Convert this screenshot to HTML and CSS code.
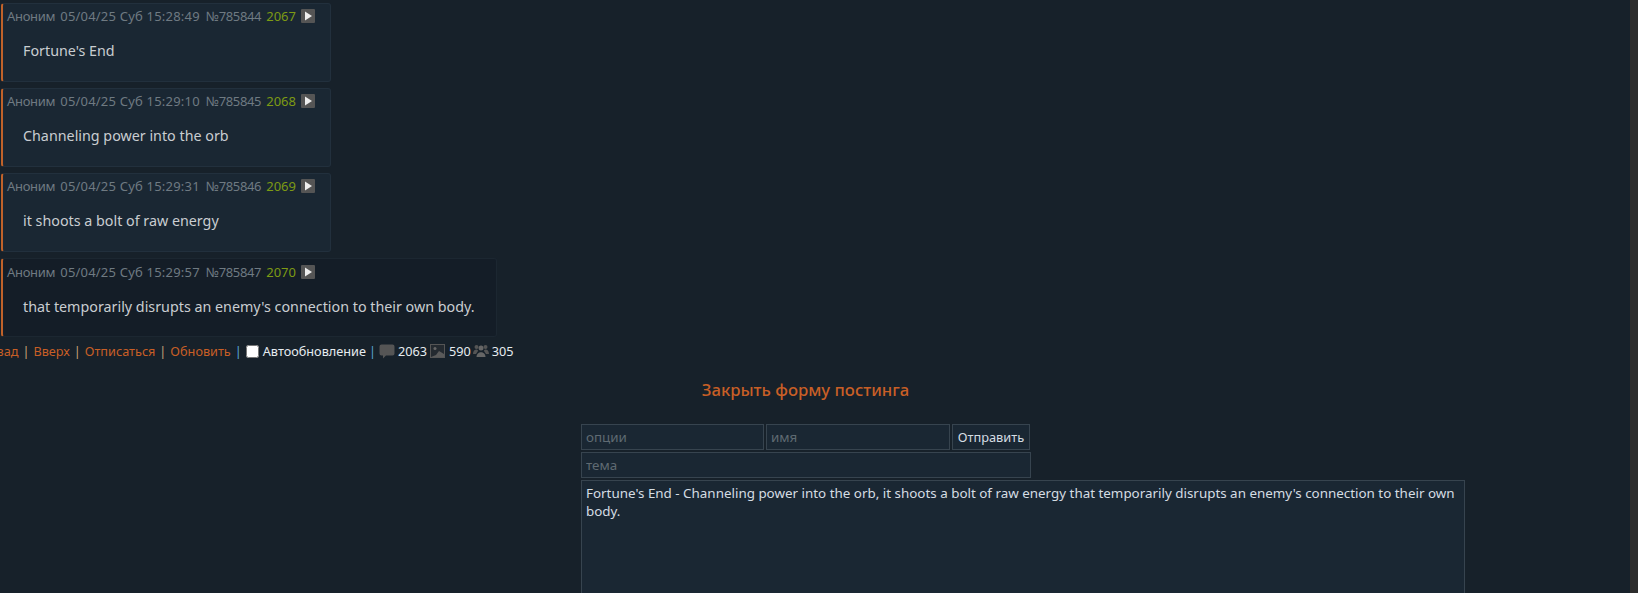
FILE: index.html
```html
<!DOCTYPE html>
<html lang="ru">
<head>
<meta charset="utf-8">
<title>Тред</title>
<link rel="stylesheet" href="styles.css">
</head>
<body>
<div class="page">
  <main class="content">
    <section class="thread">
      <article class="post">
        <div class="meta"><span class="author">Аноним</span><span class="date">05/04/25 Суб 15:28:49</span><span class="pid">№785844</span><span class="num">2067</span><span class="play"><svg viewBox="0 0 14 14" width="14" height="14"><rect width="14" height="14" rx="1" fill="#555"/><path d="M4 2.500 11 7 4 11.500Z" fill="#eee"/></svg></span></div>
        <p class="msg">Fortune's End</p>
      </article>
      <article class="post">
        <div class="meta"><span class="author">Аноним</span><span class="date">05/04/25 Суб 15:29:10</span><span class="pid">№785845</span><span class="num">2068</span><span class="play"><svg viewBox="0 0 14 14" width="14" height="14"><rect width="14" height="14" rx="1" fill="#555"/><path d="M4 2.500 11 7 4 11.500Z" fill="#eee"/></svg></span></div>
        <p class="msg">Channeling power into the orb</p>
      </article>
      <article class="post">
        <div class="meta"><span class="author">Аноним</span><span class="date">05/04/25 Суб 15:29:31</span><span class="pid">№785846</span><span class="num">2069</span><span class="play"><svg viewBox="0 0 14 14" width="14" height="14"><rect width="14" height="14" rx="1" fill="#555"/><path d="M4 2.500 11 7 4 11.500Z" fill="#eee"/></svg></span></div>
        <p class="msg">it shoots a bolt of raw energy</p>
      </article>
      <article class="post last">
        <div class="meta"><span class="author">Аноним</span><span class="date">05/04/25 Суб 15:29:57</span><span class="pid">№785847</span><span class="num">2070</span><span class="play"><svg viewBox="0 0 14 14" width="14" height="14"><rect width="14" height="14" rx="1" fill="#555"/><path d="M4 2.500 11 7 4 11.500Z" fill="#eee"/></svg></span></div>
        <p class="msg">that temporarily disrupts an enemy's connection to their own body.</p>
      </article>
    </section>
    <nav class="nav">
      <a href="#">Назад</a><span class="sep">|</span><a href="#">Вверх</a><span class="sep">|</span><a href="#">Отписаться</a><span class="sep">|</span><a href="#">Обновить</a><span class="sep blue">|</span>
      <label class="auto"><input type="checkbox"><span>Автообновление</span></label><span class="sep blue tight">|</span>
      <svg class="ico" viewBox="0 0 16 16" width="16" height="16"><path d="M2.500 1.500h11a2 2 0 0 1 2 2v7a2 2 0 0 1-2 2H7l-3 3v-3H2.500a2 2 0 0 1-2-2v-7a2 2 0 0 1 2-2Z" fill="#555"/></svg><span class="stat">2063</span>
      <svg class="ico" viewBox="0 0 16 16" width="16" height="16"><rect x=".5" y="1.500" width="14" height="13" fill="#242a30" stroke="#555"/><circle cx="5" cy="5.500" r="1.500" fill="#666"/><path d="M1 14l5-2 3-4 5 3v3Z" fill="#5a5a5a"/></svg><span class="stat">590</span>
      <svg class="ico users" viewBox="0 0 16 16" width="16" height="16"><circle cx="8" cy="5" r="2.500" fill="#666"/><circle cx="3.500" cy="4" r="2" fill="#555"/><circle cx="12.500" cy="4" r="2" fill="#555"/><path d="M3.500 14c0-6.500 9-6.500 9 0Z" fill="#666"/><path d="M0 11c0-5 5-5.500 5-3l-2 3Zm16 0c0-5-5-5.500-5-3l2 3Z" fill="#555"/></svg><span class="stat">305</span>
    </nav>
    <h2 class="form-title"><a href="#">Закрыть форму постинга</a></h2>
    <form class="form">
      <div class="row">
        <input class="field opts" type="text" placeholder="опции">
        <input class="field name" type="text" placeholder="имя">
        <button class="send" type="button">Отправить</button>
      </div>
      <input class="field subj" type="text" placeholder="тема">
      <textarea class="text">Fortune's End - Channeling power into the orb, it shoots a bolt of raw energy that temporarily disrupts an enemy's connection to their own body.</textarea>
    </form>
  </main>
  <div class="scrollbar"></div>
</div>
</body>
</html>
```
FILE: styles.css
```css
* { box-sizing: border-box; }
html, body { margin: 0; height: 100%; overflow: hidden; }
body {
  background: #17212a;
  color: #c9cdd1;
  font: 14px/20px "Noto Sans", "Open Sans", sans-serif;
}
.page { display: flex; height: 593px; overflow: hidden; }
.content {
  flex: 1;
  min-width: 0;
  overflow: hidden;
  padding: 3px 0 0 1px;
}
.scrollbar { width: 8px; background: #2c2c2c; }
.thread { display: flex; flex-direction: column; gap: 6px; align-items: flex-start; }
.post {
  width: 330px;
  height: 79px;
  background: #1a2733;
  border: 1px solid #22303d;
  border-left: 2px solid #c0622a;
  border-radius: 3px;
  padding: 3px 0 0 4px;
}
.post.last { width: 496px; padding-top: 4px; background: #141d27; border-color: #1c2731; border-left-color: #c0622a; }
.meta { display: flex; align-items: center; gap: 5px; color: #6f7a82; font-size: 13px; height: 18px; white-space: nowrap; }
.author { letter-spacing: -.3px; }
.date { letter-spacing: .2px; }
.pid { letter-spacing: -.35px; margin-left: 1px; }
.num { color: #7d9a14; }
.play { display: flex; }
.msg { margin: 16px 0 0 16px; color: #c9cdd1; font-size: 14.300px; line-height: 20px; }
.nav {
  display: flex;
  align-items: center;
  margin: 4px 0 0 -20px;
  height: 20px;
  font-size: 12.700px;
  white-space: nowrap;
  color: #e6ecf0;
}
.nav a { color: #c85f26; text-decoration: none; }
.sep { margin: 0 4px; color: #c9a27a; }
.sep.blue { color: #5aa7d8; }
.sep.tight { margin: 0 3px; }
.auto { display: flex; align-items: center; }
.auto input { margin: 0 4px 0 0; width: 13px; height: 13px; }
.ico { margin-right: 3px; }
.ico.users { margin-left: -1px; }
.stat { margin-right: 3px; }
.form-title { margin: 17px 0 0; text-align: center; font-size: 16.700px; line-height: 24px; font-weight: 500; padding-right: 20px; }
.form-title a { color: #c85f26; text-decoration: none; }
.form { display: flex; flex-direction: column; gap: 2px; margin: 22px 0 0 580px; width: 884px; }
.row { display: flex; gap: 2px; width: 450px; }
.field, .send, .text {
  background: #1a2733;
  border: 1px solid #37444f;
  color: #d5dde3;
  font: 13.400px/18px "Noto Sans", "Open Sans", sans-serif;
  outline: none;
}
.field { height: 26px; padding: 0 4px; }
.field::placeholder { color: #5f6a72; opacity: 1; }
.opts { width: 183px; }
.name { width: 184px; }
.send { width: 78px; height: 26px; padding: 0; color: #d5dde3; font-size: 12.800px; }
.subj { width: 450px; }
.text { width: 884px; height: 160px; padding: 3px 4px; resize: none; display: block; }
```
